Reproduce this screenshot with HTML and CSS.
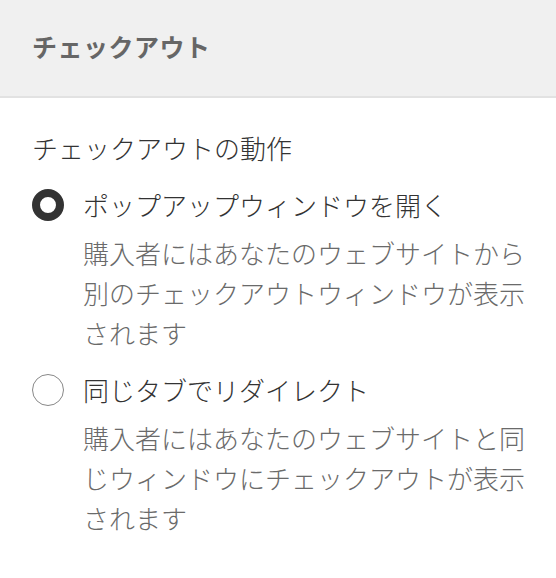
FILE: index.html
```html
<!DOCTYPE html>
<html lang="ja">
<head>
<meta charset="utf-8">
<link rel="stylesheet" href="styles.css">
</head>
<body>
<div class="panel">
  <header class="panel-header">
    <h1 class="panel-title">チェックアウト</h1>
  </header>
  <section class="panel-body">
    <div class="field-label">チェックアウトの動作</div>
    <div class="option">
      <div class="option-row">
        <span class="radio radio-checked"></span>
        <span class="option-text">ポップアップウィンドウを開く</span>
      </div>
      <p class="option-desc">購入者にはあなたのウェブサイトから別のチェックアウトウィンドウが表示されます</p>
    </div>
    <div class="option">
      <div class="option-row">
        <span class="radio"></span>
        <span class="option-text">同じタブでリダイレクト</span>
      </div>
      <p class="option-desc">購入者にはあなたのウェブサイトと同じウィンドウにチェックアウトが表示されます</p>
    </div>
  </section>
</div>
</body>
</html>
```
FILE: styles.css
```css
html, body {
  margin: 0;
  padding: 0;
  background: #ffffff;
}
body {
  font-family: "Noto Sans CJK JP", "Noto Sans", sans-serif;
  font-weight: 300;
  color: #333333;
}
.panel-header {
  height: 98px;
  box-sizing: border-box;
  padding: 0 32px 3px 32px;
  background: #f0f0f0;
  border-bottom: 2px solid #e2e2e2;
  display: flex;
  align-items: center;
}
.panel-title {
  margin: 0;
  font-size: 25px;
  font-weight: 700;
  color: #666666;
  line-height: 1;
  letter-spacing: 0.5px;
}
.panel-body {
  padding: 30px 32px 0 32px;
}
.field-label {
  font-size: 26px;
  line-height: 40px;
  color: #333333;
}
.option {
  margin-top: 17px;
}
.option-row {
  display: flex;
  align-items: center;
  gap: 19px;
  height: 40px;
}
.radio {
  width: 32px;
  height: 32px;
  box-sizing: border-box;
  border-radius: 50%;
  border: 1px solid #888888;
  flex: none;
}
.radio-checked {
  border: 8px solid #333333;
}
.option-text {
  font-size: 26px;
  line-height: 40px;
  color: #333333;
}
.option-desc {
  margin: 8px 0 0 51px;
  font-size: 26px;
  line-height: 40px;
  color: #6a6a6a;
  width: 445px;
}
```
